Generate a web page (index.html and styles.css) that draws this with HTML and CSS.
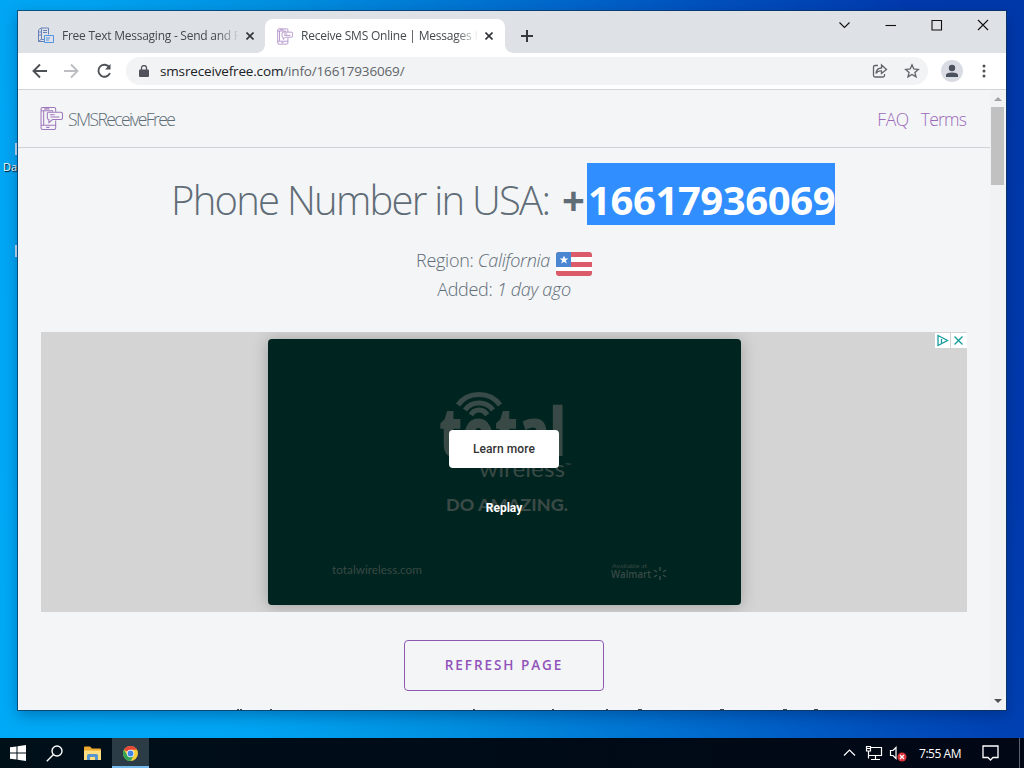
FILE: index.html
```html
<!DOCTYPE html>
<html lang="en">
  <head>
    <meta charset="UTF-8" />
    <meta name="viewport" content="width=device-width, initial-scale=1.0" />
    <title>Receive SMS Online | Messages</title>
    <link rel="stylesheet" href="styles.css">
  </head>
  <body>
    <svg class="defs" width="0" height="0">
      <symbol id="phone" viewBox="0 0 22 22">
        <path d="M11 21.5H2.5Q1 21.5 1 20V2Q1 .5 2.500.5H13.500Q15 .5 15 2V4.500M15 13V20Q15 21.500 13.500 21.500H11M1 3.500H12V4.500M1 17.500H15M3.500 3.500V17M6 19.500H9M4 1.800H9" />
        <path d="M8 5H20Q21.500 5 21.500 6.500V10.500Q21.500 12 20 12H12L8.500 15V12Q7 12 7 10.500V6.500Q7 5 8 5ZM9.500 7.500H14M10 9.500H18.500" />
      </symbol>
    </svg>
    <div class="desktop">
      <div class="shortcut first"><i></i><span>Da</span></div>
      <div class="shortcut second"><i></i></div>
      <div class="window">
        <div class="tabs">
          <div class="tab">
            <svg class="favicon" viewBox="0 0 18 18" fill="none" stroke="#6682b8">
              <path d="M1.500 14.500V3L4 1H11.500V7.500M4.500 1.500V12.500H7M6 3.500H10M6 5.500H10M1.500 14.500H7M1.500 14.500L4.500 12M2 5H4M2 8H4" />
              <path d="M7.500 8.500H16.500V15.500H7.500ZM9 11H13M9 13H12" stroke="#5096e4" />
            </svg>
            <span class="tabtitle one">Free Text Messaging - Send and R</span>
            <svg class="tabclose" viewBox="0 0 8 8"><path d="M.5 .5L7.500 7.500M7.500 .5L.5 7.500" /></svg>
          </div>
          <div class="tab active">
            <svg class="favicon purple"><use href="#phone" /></svg>
            <span class="tabtitle two">Receive SMS Online | Messages f</span>
            <svg class="tabclose" viewBox="0 0 8 8"><path d="M.5 .5L7.500 7.500M7.500 .5L.5 7.500" /></svg>
          </div>
          <svg class="newtab" viewBox="0 0 12 12"><path d="M6 0V12M0 6H12" /></svg>
          <svg class="winbuttons" width="150" height="12" viewBox="0 0 150 12" fill="none" stroke="#111" stroke-width="1.100">
            <path d="M.5 3.500L5.500 8.500L10.500 3.500" />
            <path d="M46.500 6.500H57" />
            <path d="M93 1.500H102.500V11H93Z" />
            <path d="M139 1L149 11M149 1L139 11" />
          </svg>
        </div>
        <div class="toolbar">
          <svg class="nav" width="80" height="16" viewBox="0 0 80 16" fill="none" stroke="#4d5156" stroke-width="1.900">
            <path d="M15 8H2M8 1.500L1.500 8L8 14.500" />
            <path d="M32 8H45M39 1.500L45.500 8L39 14.500" stroke="#bcbec1" />
            <path d="M77.500 4.500A6 6 0 1 0 78 10" />
            <path d="M78.500 1V6.500H73Z" fill="#4d5156" stroke="none" />
          </svg>
          <div class="address">
            <svg class="lock" viewBox="0 0 10 12"><path d="M1 4.500H9Q10 4.500 10 5.500V11Q10 12 9 12H1Q0 12 0 11V5.500Q0 4.500 1 4.500Z" /><path d="M2.500 5V3A2.500 2.500 0 0 1 7.500 3V5" fill="none" stroke="#50545a" stroke-width="1.300" /></svg>
            <span class="url"><b>smsreceivefree.com</b>/info/16617936069/</span>
            <svg class="addricons" width="48" height="16" viewBox="0 0 48 16" fill="none" stroke="#5f6368" stroke-width="1.300">
              <path d="M6 2.500H3Q1.500 2.500 1.500 4V12.500Q1.500 14 3 14H11Q12.500 14 12.500 12.500V11" />
              <path d="M4 10.500Q4.500 5 9.500 5V2L14.500 6.500L9.500 10.500V8Q6 7.500 4 10.500Z" />
              <path d="M40 1.800L41.800 6L46.300 6.400L42.900 9.400L44 13.800L40 11.400L36 13.800L37.100 9.400L33.700 6.400L38.200 6Z" />
            </svg>
          </div>
          <svg class="profile" viewBox="0 0 22 22"><circle cx="11" cy="11" r="11" fill="#dadce4" /><circle cx="11" cy="8" r="3.200" /><path d="M5 17V15Q5 12.500 11 12.500T17 15V17Z" /></svg>
          <svg class="dots" viewBox="0 0 4 14"><circle cx="2" cy="2" r="1.500" /><circle cx="2" cy="7" r="1.500" /><circle cx="2" cy="12" r="1.500" /></svg>
        </div>
        <div class="viewport">
          <div class="page">
            <div class="header">
              <svg class="logo purple"><use href="#phone" /></svg>
              <span class="brand">SMSReceiveFree</span>
              <div class="links"><a class="faq">FAQ</a><a class="terms">Terms</a></div>
            </div>
            <h1><span class="label">Phone Number in USA:</span><b class="plus">+</b><b class="number">16617936069</b></h1>
            <div class="info">
              <div class="region"><span>Region: <em>California</em></span>
                <svg class="flag" viewBox="0 0 36 24">
                  <path d="M3 0H33Q36 0 36 3V5H0V3Q0 0 3 0ZM0 10H36V15H0ZM0 19H36V21Q36 24 33 24H3Q0 24 0 21Z" fill="#dc5b6b" />
                  <path d="M15 5H36V10H15ZM0 15H36V19H0Z" fill="#fff" />
                  <path d="M3 0H15V15H0V3Q0 0 3 0Z" fill="#4a86d2" />
                  <path d="M8 3.500L9.200 6.500H12.300L9.800 8.400L10.800 11.600L8 9.700L5.200 11.600L6.200 8.400L3.700 6.500H6.800Z" fill="#fff" />
                </svg>
              </div>
              <div class="added">Added: <em>1 day ago</em></div>
            </div>
            <div class="ad">
              <div class="card">
                <svg class="adart" width="473" height="266" viewBox="0 0 473 266">
                  <g fill="none" stroke="#384b48" stroke-width="5">
                    <path d="M190 66A25 23 0 0 1 232 66" />
                    <path d="M197 71A17 16 0 0 1 225 71" />
                    <path d="M203 76A9 9 0 0 1 219 76" />
                  </g>
                  <g fill="#394945">
                    <text class="total" x="171" y="117" font-size="67" textLength="127" lengthAdjust="spacingAndGlyphs">total</text>
                    <text class="thin" x="211" y="138" font-size="24" textLength="86" lengthAdjust="spacingAndGlyphs">wireless</text>
                    <text class="thin" x="297" y="130" font-size="8">™</text>
                    <text class="heavy" x="178" y="172" font-size="17" textLength="122" lengthAdjust="spacingAndGlyphs">DO AMAZING.</text>
                    <text class="thin" x="64" y="235" font-size="11" textLength="90" lengthAdjust="spacingAndGlyphs">totalwireless.com</text>
                    <text class="thin" x="344" y="229" font-size="6" textLength="35" lengthAdjust="spacingAndGlyphs">Available at</text>
                    <text class="walmart" x="343" y="239" font-size="11" textLength="40" lengthAdjust="spacingAndGlyphs">Walmart</text>
                  </g>
                  <path d="M392 228V232M392 237V241M386 231L389 233M395 236L398 238M398 231L395 233M389 236L386 238" stroke="#394945" stroke-width="1.500" />
                </svg>
                <div class="cardactions">
                  <div class="learn">Learn more</div>
                  <div class="replay">Replay</div>
                </div>
              </div>
              <svg class="adchoices" width="32" height="15" viewBox="0 0 32 15" fill="none" stroke="#149b9b" stroke-width="1.300">
                <path d="M0 0H32V15H0Z" fill="#fff" stroke="none" />
                <path d="M3 2.500L12.500 7.500L3 12.500ZM6.500 6V10" />
                <path d="M19.500 3.500L27.500 11.500M27.500 3.500L19.500 11.500" />
                <path d="M15.500 0V15" stroke="#d3d3d3" stroke-width="1" />
              </svg>
            </div>
            <div class="refresh">REFRESH PAGE</div>
            <!-- tops of the line below the fold -->
            <svg class="fold" width="640" height="2" viewBox="0 0 640 2"><path d="M53 1.500H55M56 1.500H58M86 1.500H88M289 1.500H291M368 1.500H370M422 1.500H424M454 1.500H458M536 1.500H540M599 1.500H603M630 1.500H634" /></svg>
          </div>
          <div class="scrollbar"><i class="up"></i><div class="thumb"></div><i class="down"></i></div>
        </div>
      </div>
      <div class="taskbar">
        <div class="item"><svg width="16" height="16" viewBox="0 0 16 16" fill="#fff"><path d="M0 2.300L6.500 1.400V7.500H0ZM7.500 1.200L16 0V7.500H7.500ZM0 8.500H6.500V14.600L0 13.700ZM7.500 8.500H16V16L7.500 14.800Z" /></svg></div>
        <div class="item"><svg width="17" height="17" viewBox="0 0 17 17" fill="none" stroke="#fff" stroke-width="1.400"><circle cx="11" cy="6" r="5" /><path d="M7.500 9.500L.8 16.200" /></svg></div>
        <div class="item files"><svg width="17" height="15" viewBox="0 0 17 15"><path d="M0 1.500Q0 .5 1 .5H6L8 2.500H16Q17 2.500 17 3.500V13H0Z" fill="#f0a92e" /><path d="M0 4.500H17V14H0Z" fill="#ffdf80" /><path d="M3 14V9.500Q3 8 4.500 8H12.500Q14 8 14 9.500V14H11V11H6V14Z" fill="#5795d0" /></svg></div>
        <div class="item current">
          <svg width="15" height="15" viewBox="0 0 16 16"><circle cx="8" cy="8" r="8" fill="#f8cd3a" /><path d="M8 8L1.070 4A8 8 0 0 1 14.930 4H8Z" fill="#e5473b" /><path d="M1.070 4A8 8 0 0 0 8 16L11.500 10L8 8L4.600 10Z" fill="#35a257" /><circle cx="8" cy="8" r="3.900" fill="#fff" /><circle cx="8" cy="8" r="3.100" fill="#4283e8" /></svg>
        </div>
        <div class="tray">
          <svg width="64" height="18" viewBox="0 0 64 18" fill="none" stroke="#fff" stroke-width="1.200">
            <path d="M1 11.500L6.500 6L12 11.500" />
            <path d="M27.500 3.500H38.500V11.500H26M32.500 11.500V15M28 15.500H37M23.500 2.500H27.500V7H23.500ZM25.500 7V14.500M23.500 4.500H27" />
            <path d="M47.500 6.500H50L53 3.500V14.500L50 11.500H47.500Z" />
            <circle cx="59" cy="13" r="4.500" fill="#dc343c" stroke="none" />
            <path d="M57 11L61 15M61 11L57 15" />
          </svg>
          <span class="clock">7:55 AM</span>
          <svg width="17" height="16" viewBox="0 0 17 16" fill="none" stroke="#fff" stroke-width="1.300"><path d="M1 1H16V12.500H11L8.500 15L6 12.500H1Z" /></svg>
          <i class="peek"></i>
        </div>
      </div>
    </div>
  </body>
</html>
```

FILE: styles.css
```css
* {
  box-sizing: border-box;
}

body {
  margin: 0;
  overflow: hidden;
  font-family: "Open Sans", "Noto Sans", sans-serif;
}

svg {
  display: block;
  flex: none;
}

span, a, b {
  white-space: nowrap;
}

.defs {
  position: absolute;
}

.desktop {
  position: relative;
  display: flex;
  flex-direction: column;
  justify-content: flex-end;
  width: 1024px;
  height: 768px;
  background: linear-gradient(77deg, #00aaf6 0%, #00a4f2 22%, #0090e0 38%, #0074d2 54%, #0050bd 74%, #003aad 90%, #0038aa 100%);
}

.shortcut {
  position: absolute;
  left: 3px;
  color: #fff;
  font-size: 11px;
  line-height: 14px;
  text-shadow: 1px 1px 1px #000;
}

.shortcut i {
  display: block;
  width: 2px;
  height: 12px;
  margin: 0 0 5px 12px;
  background: #c5e2f3;
}

.first {
  top: 143px;
}

.second {
  top: 245px;
}

/* browser window */
.window {
  position: absolute;
  left: 18px;
  top: 11px;
  display: flex;
  flex-direction: column;
  width: 988px;
  height: 699px;
  background: #f3f5f7;
  box-shadow: 0 0 0 1px rgba(10, 50, 90, 0.7), 0 5px 14px rgba(0, 20, 70, 0.35);
}

.tabs {
  display: flex;
  align-items: flex-start;
  height: 42px;
  padding-top: 8px;
  background: #dee1e6;
}

.tab {
  display: flex;
  align-items: center;
  width: 247px;
  height: 34px;
  padding-left: 19px;
}

.tab.active {
  position: relative;
  width: 240px;
  padding-left: 12px;
  background: #fff;
  border-radius: 8px 8px 0 0;
}

.tab.active::before, .tab.active::after {
  content: "";
  position: absolute;
  bottom: 0;
  left: -8px;
  width: 8px;
  height: 8px;
  background: radial-gradient(circle at 0 0, transparent 7.5px, #fff 8px);
}

.tab.active::after {
  left: 240px;
  background: radial-gradient(circle at 100% 0, transparent 7.5px, #fff 8px);
}

.favicon {
  width: 18px;
  height: 18px;
}

.active .favicon {
  width: 16px;
  height: 17px;
}

.purple {
  fill: none;
  stroke: #a077bd;
}

.tabtitle {
  width: 176px;
  margin: -1px 8px 0 7px;
  overflow: hidden;
  color: #45494d;
  font-size: 12px;
  -webkit-mask-image: linear-gradient(90deg, #000 88%, transparent 101%);
}

.one {
  letter-spacing: -0.25px;
}

.two {
  letter-spacing: -0.22px;
}

.active .tabtitle {
  margin-left: 8px;
}

.tabclose {
  width: 8px;
  height: 8px;
  margin-top: -1px;
  fill: none;
  stroke: #303338;
  stroke-width: 1.6;
}

.newtab {
  width: 12px;
  height: 12px;
  margin: 11px 0 0 16px;
  fill: none;
  stroke: #35383c;
  stroke-width: 2;
}

.winbuttons {
  margin-left: 306px;
}

.toolbar {
  display: flex;
  align-items: center;
  height: 36px;
  padding: 0 17px 0 14px;
  background: #fff;
}

.address {
  display: flex;
  align-items: center;
  width: 802px;
  height: 28px;
  margin-left: 14px;
  padding: 0 8px 0 13px;
  border-radius: 14px;
  background: #f1f3f4;
}

.lock {
  width: 10px;
  height: 12px;
  margin-right: 11px;
  fill: #50545a;
}

.url {
  color: #606469;
  font-size: 13.5px;
  letter-spacing: -0.16px;
}

.url b {
  color: #202124;
  font-weight: 400;
}

.addricons {
  margin-left: auto;
}

.profile {
  width: 22px;
  height: 22px;
  margin-left: 13px;
  fill: #4b515d;
}

.dots {
  width: 4px;
  height: 14px;
  margin-left: auto;
  margin-right: 3px;
  fill: #4d5156;
}

.viewport {
  display: flex;
  flex: 1;
  min-height: 0;
  border-top: 1px solid #d3d5d8;
}

.page {
  display: flex;
  flex-direction: column;
  align-items: center;
  width: 972px;
  overflow: hidden;
  color: #606c76;
  font-weight: 300;
}

.page > * {
  flex-shrink: 0;
}

.header {
  display: flex;
  align-items: center;
  width: 972px;
  height: 58px;
  padding: 0 24px 0 22px;
  border-bottom: 1px solid #d1d1d8;
}

.logo {
  width: 23px;
  height: 23px;
  margin-top: -1px;
  margin-right: 5px;
}

.brand {
  font-size: 17.5px;
  letter-spacing: -1.6px;
}

.links {
  display: flex;
  gap: 12px;
  margin-left: auto;
  color: #9b6aba;
  font-size: 17.5px;
  letter-spacing: -0.8px;
}

.faq {
  letter-spacing: -0.4px;
}

h1 {
  display: flex;
  width: 664px;
  height: 62px;
  margin: 15px 0 0;
  color: #606c76;
  font-size: 40px;
  font-weight: 300;
  line-height: 74px;
}

.label {
  width: 390px;
  margin-left: -1px;
  margin-right: 1px;
  letter-spacing: -1.75px;
}

.plus {
  width: 25px;
  font-weight: 700;
}

.number {
  width: 248px;
  padding-left: 1px;
  background: #308efe;
  color: #fff;
  font-weight: 700;
  letter-spacing: -0.4px;
}

.info {
  margin-top: 21px;
  font-size: 18px;
  line-height: 29px;
  letter-spacing: -0.3px;
}

.region {
  display: flex;
  align-items: center;
  gap: 6px;
}

.flag {
  width: 36px;
  height: 24px;
  margin-top: 6px;
  margin-bottom: -1px;
}

.added {
  text-align: center;
}

.ad {
  position: relative;
  display: flex;
  justify-content: center;
  width: 926px;
  height: 280px;
  margin-top: 28px;
  padding-top: 7px;
  background: #d4d4d4;
  overflow: hidden;
}

.card {
  position: relative;
  width: 473px;
  height: 266px;
  border-radius: 4px;
  background: #00241f;
  box-shadow: 0 1px 16px rgba(0, 0, 0, 0.25);
}

.cardactions {
  position: absolute;
  inset: 91px 0 0;
  display: flex;
  flex-direction: column;
  align-items: center;
  font-family: Roboto, sans-serif;
  font-size: 12px;
}

.learn {
  width: 110px;
  height: 38px;
  border-radius: 4px;
  background: #fff;
  color: #333;
  font-weight: 500;
  line-height: 38px;
  text-align: center;
  letter-spacing: 0.1px;
}

.replay {
  margin-top: 33px;
  color: #fff;
  font-weight: 700;
}

.total {
  font-family: "Open Sans", sans-serif;
  font-weight: 800;
}

.thin {
  font-family: Lato, sans-serif;
  font-weight: 400;
}

.heavy {
  font-family: Lato, sans-serif;
  font-weight: 900;
}

.walmart {
  font-family: "Open Sans", sans-serif;
  font-weight: 600;
}

.adchoices {
  position: absolute;
  top: 1px;
  right: 0;
}

.refresh {
  width: 200px;
  height: 51px;
  margin-top: 28px;
  border: 1px solid #8e5aaf;
  border-radius: 4px;
  color: #9153ba;
  font-size: 13.5px;
  font-weight: 600;
  line-height: 49px;
  text-align: center;
  letter-spacing: 1.95px;
}

.fold {
  margin-top: 17px;
  stroke: #454b55;
  stroke-width: 1;
}

.scrollbar {
  display: flex;
  flex-direction: column;
  align-items: center;
  width: 16px;
  padding: 7px 2px 7px 1px;
  background: #f1f2f3;
}

.thumb {
  width: 13px;
  height: 78px;
  margin-top: 6px;
  background: #c1c1c1;
}

.up, .down {
  border: 4px solid transparent;
  border-top: 0;
  border-bottom-color: #a3a3a3;
}

.down {
  margin-top: auto;
  border-top: 4px solid #505050;
  border-bottom: 0;
}

/* taskbar */
.taskbar {
  display: flex;
  height: 30px;
  background: linear-gradient(90deg, #001019, #000b18 50%, #020715);
}

.item {
  display: flex;
  align-items: center;
  justify-content: center;
  width: 36px;
}

.files {
  width: 40px;
}

.current {
  width: 37px;
  border-bottom: 2px solid #76b9ed;
  background: #2c3c46;
  padding-top: 2px;
}

.tray {
  display: flex;
  align-items: center;
  margin-left: auto;
  color: #fff;
}

.clock {
  width: 43px;
  margin: 0 20px 0 12px;
  font-size: 12px;
  letter-spacing: -0.45px;
}

.peek {
  width: 5px;
  height: 30px;
  margin-left: 20px;
  border-left: 1px solid #596270;
}
```
